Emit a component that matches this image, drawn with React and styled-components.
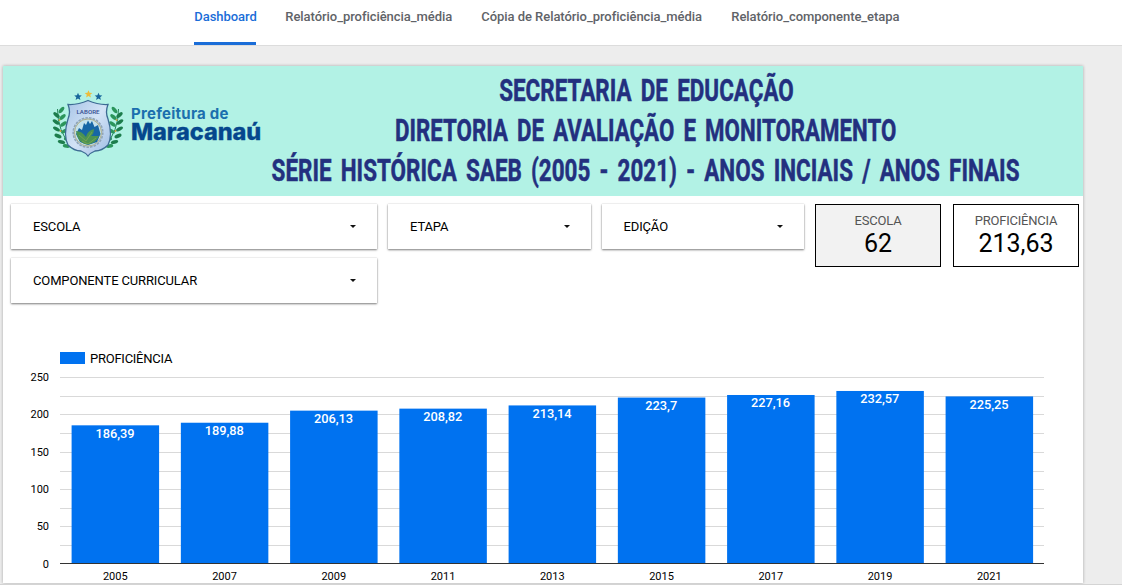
import React from "react";
import styled, { createGlobalStyle } from "styled-components";

const GlobalStyle = createGlobalStyle`
  * { box-sizing: border-box; }
  html, body { margin: 0; height: 100%; overflow: hidden; }
  body { background: #ededed; font-family: Roboto, "Liberation Sans", sans-serif; color: #000; }
`;

const Screen = styled.div`
  display: flex;
  flex-direction: column;
  height: 585px;
  border-bottom: 1px solid #d4d4d4;
  overflow: hidden;
`;

const TabBar = styled.nav`
  display: flex;
  flex: none;
  gap: 29px;
  height: 46px;
  padding-left: 194px;
  background: #fff;
  border-bottom: 1px solid #dcdcdc;
`;

const Tab = styled.a`
  height: 45px;
  width: ${(p) => p.$width}px;
  padding: 9px 0 0 0.3px;
  font-size: 13px;
  font-weight: 500;
  line-height: 16px;
  letter-spacing: -0.05px;
  white-space: nowrap;
  color: ${(p) => (p.$active ? "#1a6dd8" : "#5f6368")};
  background: ${(p) =>
    p.$active ? "linear-gradient(#1a6dd8, #1a6dd8) bottom / 100% 3px no-repeat" : "none"};
`;

const Report = styled.main`
  flex: none;
  width: 1080px;
  height: 517px;
  margin: 20px 0 0 3px;
  background: #fff;
  box-shadow: 0 0 3px rgba(0, 0, 0, 0.3);
`;

const Banner = styled.header`
  display: flex;
  height: 130px;
  background: #b2f2e5;
`;

const Brand = styled.div`
  display: flex;
  flex: none;
  width: 263px;
  padding: 23px 0 0 48px;
`;

const BrandName = styled.div`
  display: flex;
  flex-direction: column;
  padding: 16px 0 0 7px;
  font-family: Inter, Roboto, sans-serif;
  white-space: nowrap;
`;

const BrandSmall = styled.span`
  font-size: 15px;
  line-height: 17px;
  font-weight: 700;
  letter-spacing: 0.25px;
  color: #1b6fae;
`;

const BrandLarge = styled.span`
  font-size: 23.5px;
  line-height: 20px;
  font-weight: 800;
  letter-spacing: -0.1px;
  color: #05478d;
  -webkit-text-stroke: 0.3px #05478d;
`;

const Titles = styled.div`
  display: flex;
  flex-direction: column;
  align-items: center;
  width: 760px;
  padding-top: 4.5px;
`;

const TitleLine = styled.div`
  font-size: 31px;
  font-weight: 700;
  line-height: 40px;
  word-spacing: 5px;
  white-space: nowrap;
  color: #23307f;
  -webkit-text-stroke: 0.5px #23307f;
  transform: scaleX(${(p) => p.$stretch});
`;

const Controls = styled.section`
  display: grid;
  grid-template-columns: 366px 202.5px 202.5px 127px 126px;
  grid-template-rows: 45px 45px;
  gap: 9px 11px;
  padding: 8px 0 0 8px;
`;

const Select = styled.button`
  display: flex;
  align-items: center;
  justify-content: space-between;
  padding: 0 21px 0 22px;
  border: 0;
  background: #fff;
  box-shadow: 0 1px 2px rgba(0, 0, 0, 0.5), 0 0 1px rgba(0, 0, 0, 0.2);
  font: 400 13px Roboto, sans-serif;
  letter-spacing: -0.14px;
  color: #000;
`;

const Caret = styled.span`
  border: 3px solid transparent;
  border-top-color: #111;
  border-bottom: 0;
`;

const Score = styled.div`
  display: flex;
  flex-direction: column;
  align-items: center;
  width: 126px;
  height: 63px;
  padding-top: 8px;
  border: 1px solid #000;
  background: ${(p) => (p.$shaded ? "#f2f2f2" : "#fff")};
`;

const ScoreLabel = styled.span`
  font-size: 13px;
  line-height: 16px;
  letter-spacing: -0.2px;
  color: #555;
`;

const ScoreValue = styled.span`
  font-size: 25px;
  line-height: 30px;
`;

const ChartPanel = styled.section`
  height: 243px;
  margin-top: 45px;
`;

const Legend = styled.div`
  display: flex;
  align-items: center;
  gap: 5px;
  height: 20px;
  padding-left: 57px;
  font-size: 13px;
  letter-spacing: -0.25px;
`;

const Swatch = styled.i`
  width: 25px;
  height: 12px;
  background: #0072f0;
`;

const Chart = styled.svg`
  display: block;
  font-family: Roboto, sans-serif;
`;

const TABS = [
  ["Dashboard", 62],
  ["Relatório_proficiência_média", 167],
  ["Cópia de Relatório_proficiência_média", 221],
  ["Relatório_componente_etapa", 168],
];

const DATA = [
  ["2005", 186.39],
  ["2007", 189.88],
  ["2009", 206.13],
  ["2011", 208.82],
  ["2013", 213.14],
  ["2015", 223.7],
  ["2017", 227.16],
  ["2019", 232.57],
  ["2021", 225.25],
];

const BASE = 196;
const SCALE = 0.744;
const PITCH = 109.25;

function Star({ x, y, color }) {
  return (
    <path
      transform={`translate(${x} ${y})`}
      fill={color}
      d="M0-3.8 1.1-1.2 3.8-1.1 1.7.7 2.4 3.4 0 1.9-2.4 3.4-1.7.7-3.8-1.1-1.1-1.2Z"
    />
  );
}

const LEAVES = [
  [8, 21, 50], [3, 26, -40], [9, 28, 40], [2.5, 33, -35], [10, 35, 35], [3, 40, -30],
  [11, 42, 30], [4.5, 47, -25], [14, 49, 25], [8, 53, -15], [13, 57, -8],
];

function Branch({ flip }) {
  return (
    <g transform={flip ? "translate(69 0) scale(-1 1)" : undefined}>
      <path d="M4 20Q4 42 18 58" fill="none" stroke="#25845a" strokeWidth="1" />
      {LEAVES.map(([x, y, r], i) => (
        <ellipse
          key={i}
          cx={x}
          cy={y}
          rx="3.8"
          ry="1.8"
          fill={i % 2 ? "#1d7d4c" : "#2b955b"}
          transform={`rotate(${i % 2 ? -r : -r} ${x} ${y})`}
        />
      ))}
      <circle cx="6" cy="31" r="0.9" fill="#d2a23c" />
      <circle cx="7" cy="42" r="0.9" fill="#d2a23c" />
    </g>
  );
}

function Crest() {
  return (
    <svg width="73" height="70" viewBox="0 0 73 70">
      <defs>
        <linearGradient id="shield" x1="0" y1="0" x2="1" y2="1">
          <stop offset="0" stopColor="#a5c3e6" />
          <stop offset="0.5" stopColor="#d3e3f6" />
          <stop offset="1" stopColor="#9bbbe2" />
        </linearGradient>
      </defs>
      <Star x={27} y={7.5} color="#17669b" />
      <Star x={37.5} y={5} color="#edbd3b" />
      <Star x={47.5} y={7.5} color="#17669b" />
      <g transform="translate(2.5 0)">
        <Branch />
        <Branch flip />
      </g>
      <path
        d="M17 15.500Q27 16 37 11.500Q47 16 57 15.500Q54 23 57 30Q62 46 57 56Q51 62 44 62Q39 64 37 67Q35 64 30 62Q23 62 17 56Q12 46 17 30Q20 23 17 15.500Z"
        fill="url(#shield)"
        stroke="#3c6b93"
        strokeWidth="1.3"
      />
      <text x="37" y="24.500" textAnchor="middle" fontSize="6.200" fontWeight="500" fill="#344c91" fontFamily="Roboto, sans-serif">
        LABORE
      </text>
      <circle cx="37" cy="43.500" r="14.800" fill="#b8cfe6" stroke="#8fa4b8" strokeWidth="1.600" strokeDasharray="2.500 1.200" />
      <circle cx="37" cy="43.500" r="13.500" fill="#c4e1ec" stroke="#a9a36f" strokeWidth="0.800" />
      <path d="M25 45 28 39 31 41 33 34 35 36 37 31.500 39 35 41 32 43.500 38 47 36 49.500 45 46 53 37 56 29 53Z" fill="#1766a5" />
      <path d="M25 42Q31 42 35 48Q36 42 43 40Q43 45 40 47L48 47Q45 54 37 55.500Q27 55 25 42Z" fill="#4b9352" />
      <path d="M28 46 35 52 41 43M31 52 37 55 45 49" fill="none" stroke="#86aa50" strokeWidth="0.700" />
    </svg>
  );
}

function BarChart() {
  return (
    <Chart width="1080" height="215" viewBox="0 0 1080 215">
      {[9, 28, 46, 65, 84, 103, 121, 140, 158, 177].map((y) => (
        <rect key={y} x="57" y={y} width="984" height="1" fill="#d9d9d9" shapeRendering="crispEdges" />
      ))}
      {[250, 200, 150, 100, 50, 0].map((v) => (
        <text key={v} x="46" y={195 - v * 0.746 + 4.5} textAnchor="end" fontSize="11">
          {v}
        </text>
      ))}
      {DATA.map(([year, value], i) => {
        const x = 68.6 + i * PITCH;
        const h = value * SCALE;
        return (
          <g key={year}>
            <rect x={x} y={BASE - h} width="87.500" height={h} fill="#0072f0" />
            <text x={x + 43.4} y={BASE - h + 12.5} textAnchor="middle" fontSize="12.800" fontWeight="500" fill="#fff">
              {String(value).replace(".", ",")}
            </text>
            <text x={x + 43.7} y="212" textAnchor="middle" fontSize="11">
              {year}
            </text>
          </g>
        );
      })}
      <rect x="57" y="195" width="984" height="1" fill="#333" />
    </Chart>
  );
}

function Filter({ label }) {
  return (
    <Select>
      {label}
      <Caret />
    </Select>
  );
}

export default function App() {
  return (
    <Screen>
      <GlobalStyle />
      <TabBar>
        {TABS.map(([name, width], i) => (
          <Tab key={name} $width={width} $active={i === 0}>
            {name}
          </Tab>
        ))}
      </TabBar>
      <Report>
        <Banner>
          <Brand>
            <Crest />
            <BrandName>
              <BrandSmall>Prefeitura de</BrandSmall>
              <BrandLarge>Maracanaú</BrandLarge>
            </BrandName>
          </Brand>
          <Titles>
            <TitleLine $stretch={0.724}>SECRETARIA DE EDUCAÇÃO</TitleLine>
            <TitleLine $stretch={0.719}>DIRETORIA DE AVALIAÇÃO E MONITORAMENTO</TitleLine>
            <TitleLine $stretch={0.724}>SÉRIE HISTÓRICA SAEB (2005 - 2021) - ANOS INCIAIS / ANOS FINAIS</TitleLine>
          </Titles>
        </Banner>
        <Controls>
          <Filter label="ESCOLA" />
          <Filter label="ETAPA" />
          <Filter label="EDIÇÃO" />
          <Score $shaded>
            <ScoreLabel>ESCOLA</ScoreLabel>
            <ScoreValue>62</ScoreValue>
          </Score>
          <Score>
            <ScoreLabel>PROFICIÊNCIA</ScoreLabel>
            <ScoreValue>213,63</ScoreValue>
          </Score>
          <Filter label="COMPONENTE CURRICULAR" />
        </Controls>
        <ChartPanel>
          <Legend>
            <Swatch />
            PROFICIÊNCIA
          </Legend>
          <BarChart />
        </ChartPanel>
      </Report>
    </Screen>
  );
}
